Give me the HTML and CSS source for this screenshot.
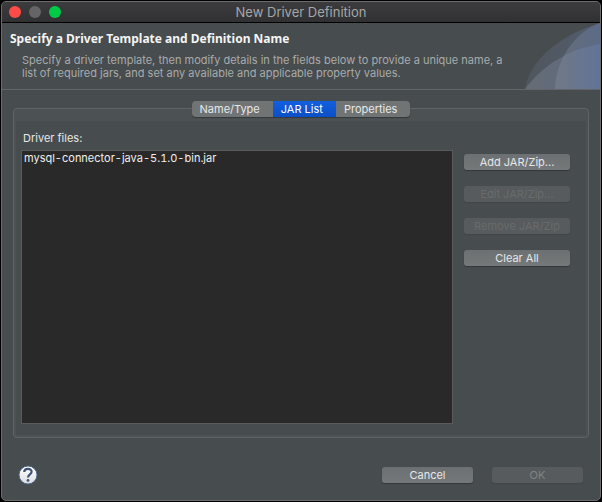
FILE: index.html
```html
<!DOCTYPE html>
<html lang="en">
<head>
<meta charset="utf-8">
<title>New Driver Definition</title>
<link rel="stylesheet" href="styles.css">
</head>
<body>
<div class="window">
  <header class="titlebar">
    <div class="lights">
      <button class="light close" type="button" aria-label="Close"></button>
      <button class="light minimize" type="button" aria-label="Minimize" disabled></button>
      <button class="light expand" type="button" aria-label="Zoom"></button>
    </div>
    <span class="window-title">New Driver Definition</span>
  </header>

  <section class="banner">
    <div class="banner-text">
      <h1>Specify a Driver Template and Definition Name</h1>
      <p>Specify a driver template, then modify details in the fields below to provide a unique name, a list of required jars, and set any available and applicable property values.</p>
    </div>
    <svg class="banner-art" viewBox="0 0 75 66" aria-hidden="true">
      <defs>
        <linearGradient id="fade" x1="0" x2="1" y1="0" y2="0">
          <stop offset="0" stop-color="#8a8f96" stop-opacity=".38"/>
          <stop offset="1" stop-color="#6c84b4" stop-opacity=".36"/>
        </linearGradient>
        <linearGradient id="fade-back" x1="0" x2="1" y1="0" y2="0">
          <stop offset="0" stop-color="#656c7c" stop-opacity=".32"/>
          <stop offset="1" stop-color="#6479a8" stop-opacity=".36"/>
        </linearGradient>
      </defs>
      <path fill="url(#fade-back)" d="M0 66C4 40 30 14 75 0V66Z"/>
      <path fill="url(#fade)" d="M0 66C18 42 44 26 75 21V66Z"/>
      <path fill="url(#fade)" d="M30 66C31 38 48 10 75 0V66Z"/>
    </svg>
  </section>

  <main class="content">
    <div class="tab-folder">
      <div class="tabs" role="tablist">
        <button class="tab" type="button" role="tab" aria-selected="false">Name/Type</button>
        <button class="tab selected" type="button" role="tab" aria-selected="true">JAR List</button>
        <button class="tab" type="button" role="tab" aria-selected="false">Properties</button>
      </div>
      <div class="tab-page" role="tabpanel">
        <label class="files-label" for="files">Driver files:</label>
        <div class="files-row">
          <select class="files" id="files" size="10">
            <option>mysql-connector-java-5.1.0-bin.jar</option>
          </select>
          <div class="actions">
            <button class="push" type="button">Add JAR/Zip...</button>
            <button class="push" type="button" disabled>Edit JAR/Zip...</button>
            <button class="push" type="button" disabled>Remove JAR/Zip</button>
            <button class="push" type="button">Clear All</button>
          </div>
        </div>
      </div>
    </div>
  </main>

  <footer class="footer">
    <button class="help" type="button" aria-label="Help">
      <svg viewBox="0 0 20 20" aria-hidden="true">
        <defs>
          <linearGradient id="ball" x1="0" x2="0" y1="0" y2="1">
            <stop offset="0" stop-color="#fff"/>
            <stop offset="1" stop-color="#dcdde0"/>
          </linearGradient>
        </defs>
        <circle cx="10" cy="10" r="9" fill="url(#ball)" stroke="#50688c"/>
        <path d="M6.2 7C6.4 2.9 13.6 2.9 13.6 6.8C13.6 9.6 10 9.3 10 12.6" fill="none" stroke="#3f5478" stroke-width="2.2"/>
        <circle cx="10" cy="15.4" r="1.4" fill="#3f5478"/>
      </svg>
    </button>
    <button class="push" type="button">Cancel</button>
    <button class="push confirm" type="button" disabled>OK</button>
  </footer>
</div>
</body>
</html>
```
FILE: styles.css
```css
* {
  box-sizing: border-box;
}

body {
  margin: 0;
  padding: 1px;
  background: #000;
  color: #e6e8e8;
  font: 11px/13px Inter, "Liberation Sans", sans-serif;
}

button {
  margin: 0;
  padding: 0;
  border: 0;
  color: inherit;
  font: inherit;
}

.window {
  display: flex;
  flex-direction: column;
  min-height: calc(100vh - 2px);
  overflow: hidden;
  border: 1px solid #6a6d6e;
  border-radius: 5px;
  background: #474c4e;
}

.titlebar {
  display: grid;
  grid-template-columns: 1fr auto 1fr;
  align-items: center;
  height: 21px;
  border-bottom: 1px solid #000;
  background: linear-gradient(#3c3c3e, #313133);
}

.lights {
  display: flex;
  gap: 8px;
  padding-left: 7px;
}

.light {
  width: 12px;
  height: 12px;
  border-radius: 50%;
}

.close {
  background: #ff4b47;
}

.minimize {
  background: #656567;
}

.expand {
  background: #00cb46;
}

.window-title {
  color: #a6a6a7;
  font-size: 13px;
  line-height: 20px;
}

.banner {
  display: flex;
  justify-content: space-between;
  border-bottom: 1px solid #626668;
}

.banner-text {
  padding: 7px 0 9px 8px;
}

.banner h1 {
  margin: 0 0 7px;
  color: #f4f4f4;
  font: bold 12px/17px "Noto Sans", sans-serif;
}

.banner p {
  max-width: 504px;
  margin: 0;
  padding-left: 12px;
  color: #a8abac;
}

.banner-art {
  flex: none;
  width: 75px;
  height: 66px;
}

.content {
  display: flex;
  flex: 1;
  padding: 18px 11px 0;
}

.tab-folder {
  display: flex;
  flex: 1;
  flex-direction: column;
  align-items: center;
  padding: 0 2px 2px;
  border: 1px solid #606466;
  border-radius: 4px;
  background: #4c5153;
}

.tabs {
  display: flex;
  margin: -8px 0 4px;
  overflow: hidden;
  border-radius: 4px;
  background: #717475;
  box-shadow: 0 1px 1px #34383a;
}

.tab {
  padding: 0 13px 0 8px;
  background: transparent;
  line-height: 16px;
}

.tab.selected {
  background: linear-gradient(#125fdf, #0b50c6);
  color: #fff;
}

.tab-page {
  display: flex;
  flex: 1;
  flex-direction: column;
  align-self: stretch;
  gap: 5px;
  padding: 11px 16px 11px 5px;
  background: #474c4e;
}

.files-label {
  padding-left: 2px;
}

.files-row {
  display: flex;
  flex: 1;
  gap: 11px;
}

.files {
  flex: 1;
  min-width: 0;
  margin: 0;
  padding: 0;
  overflow: hidden;
  border: 1px solid #5b5b5b;
  border-radius: 0;
  outline: 0;
  background: #292929;
  color: #f0f0f0;
  font: inherit;
  font-variant-numeric: tabular-nums;
}

.files option {
  min-height: 14px;
  padding: 0 2px;
}

.actions {
  display: flex;
  flex-direction: column;
  gap: 16px;
  width: 106px;
  padding-top: 4px;
}

.push {
  height: 16px;
  border-radius: 3px;
  background: linear-gradient(#6d7072, #757879);
  box-shadow: 0 1px 1px #34383a;
  line-height: 16px;
}

.push:disabled {
  background: #575b5d;
  box-shadow: 0 1px 1px #404547;
  color: #686b6c;
}

.push.confirm:disabled {
  color: #808384;
}

.footer {
  display: flex;
  align-items: center;
  gap: 19px;
  padding: 27px 17px 15px 16px;
}

.footer .push {
  width: 91px;
}

.help {
  width: 20px;
  height: 20px;
  margin-right: auto;
  background: transparent;
}

.help svg {
  display: block;
}
```
